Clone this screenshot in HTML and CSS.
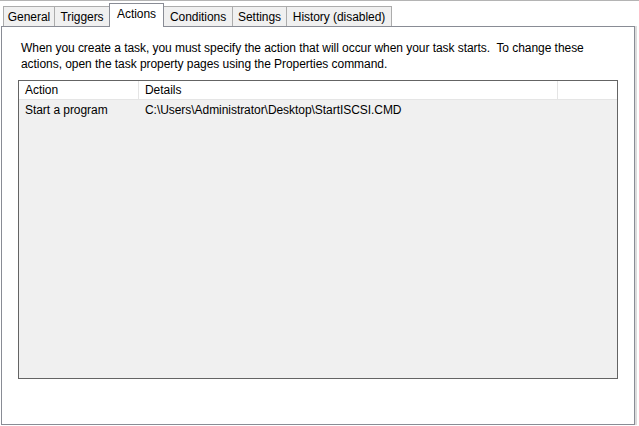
FILE: index.html
```html
<!DOCTYPE html>
<html lang="en">
<head>
    <meta charset="UTF-8">
    <meta name="viewport" content="width=device-width, initial-scale=1.0">
    <title>Task Properties - Actions</title>
    <link rel="stylesheet" href="styles.css">
</head>
<body>
    <div class="dialog">
        <div class="tabs">
            <div class="tab tab-general">General</div>
            <div class="tab tab-triggers">Triggers</div>
            <div class="tab tab-actions active">Actions</div>
            <div class="tab tab-conditions">Conditions</div>
            <div class="tab tab-settings">Settings</div>
            <div class="tab tab-history">History (disabled)</div>
        </div>

        <div class="panel">
            <p class="intro">
                When you create a task, you must specify the action that will occur when your task starts.&nbsp; To change these<br>
                actions, open the task property pages using the Properties command.
            </p>

            <div class="list">
                <div class="list-head">
                    <div class="col col-action">Action</div>
                    <div class="col col-details">Details</div>
                    <div class="col col-rest"></div>
                </div>
                <div class="list-row">
                    <div class="col col-action">Start a program</div>
                    <div class="col col-details">C:\Users\Administrator\Desktop\StartISCSI.CMD</div>
                </div>
            </div>
        </div>
    </div>
</body>
</html>
```

FILE: styles.css
```css
:root {
    --tab-border: #acacac;
    --tab-bg: #f0f0f0;
    --panel-border: #898c95;
    --list-border: #646464;
    --list-bg: #f0f0f0;
    --grid-line: #e5e5e5;
    --text-color: #000;
}

body {
    margin: 0;
    background-color: #fff;
    color: var(--text-color);
    font-family: 'Liberation Sans', Arial, sans-serif;
    font-size: 12px;
    letter-spacing: -0.05px;
}

.dialog {
    width: 639px;
    height: 426px;
    box-sizing: border-box;
    border-top: 1px solid #b4b4b4;
}

/* tab strip */
.tabs {
    display: flex;
    align-items: flex-end;
    height: 25px;
    padding-left: 3px;
}

.tab {
    height: 20px;
    box-sizing: border-box;
    padding-top: 1px;
    line-height: 19px;
    text-align: center;
    background-color: var(--tab-bg);
    border: 1px solid var(--tab-border);
    border-bottom: none;
    white-space: nowrap;
}

.tab + .tab {
    margin-left: -1px;
}

.tab-general { width: 52px; }
.tab-triggers { width: 56px; }
.tab-actions { width: 55px; }
.tab-conditions { width: 70px; }
.tab-settings { width: 55px; }
.tab-history { width: 106px; }

.tab.active {
    height: 24px;
    margin-bottom: -1px;
    background-color: #fff;
    border-color: var(--panel-border);
    position: relative;
    z-index: 1;
}

/* page body */
.panel {
    width: 634px;
    height: 399px;
    box-sizing: border-box;
    margin-left: 1px;
    padding: 13px 16px 0;
    border: 1px solid var(--panel-border);
    box-shadow: 2px 0 0 #dcdcdc;
}

.intro {
    margin: 0 0 8px 3px;
    line-height: 16px;
    white-space: nowrap;
}

.list {
    width: 600px;
    height: 299px;
    box-sizing: border-box;
    border: 1px solid var(--list-border);
    background-color: var(--list-bg);
}

.list-head,
.list-row {
    display: flex;
}

.list-head {
    height: 19px;
    box-sizing: border-box;
    background-color: #fff;
    border-bottom: 1px solid var(--grid-line);
    line-height: 19px;
}

.list-row {
    height: 20px;
    line-height: 20px;
}

.col {
    box-sizing: border-box;
    padding-left: 6px;
    white-space: nowrap;
}

.col-action {
    width: 120px;
}

.col-details {
    width: 419px;
}

.col-rest {
    flex: 1;
}

.list-head .col-action,
.list-head .col-details {
    border-right: 1px solid var(--grid-line);
}
```
